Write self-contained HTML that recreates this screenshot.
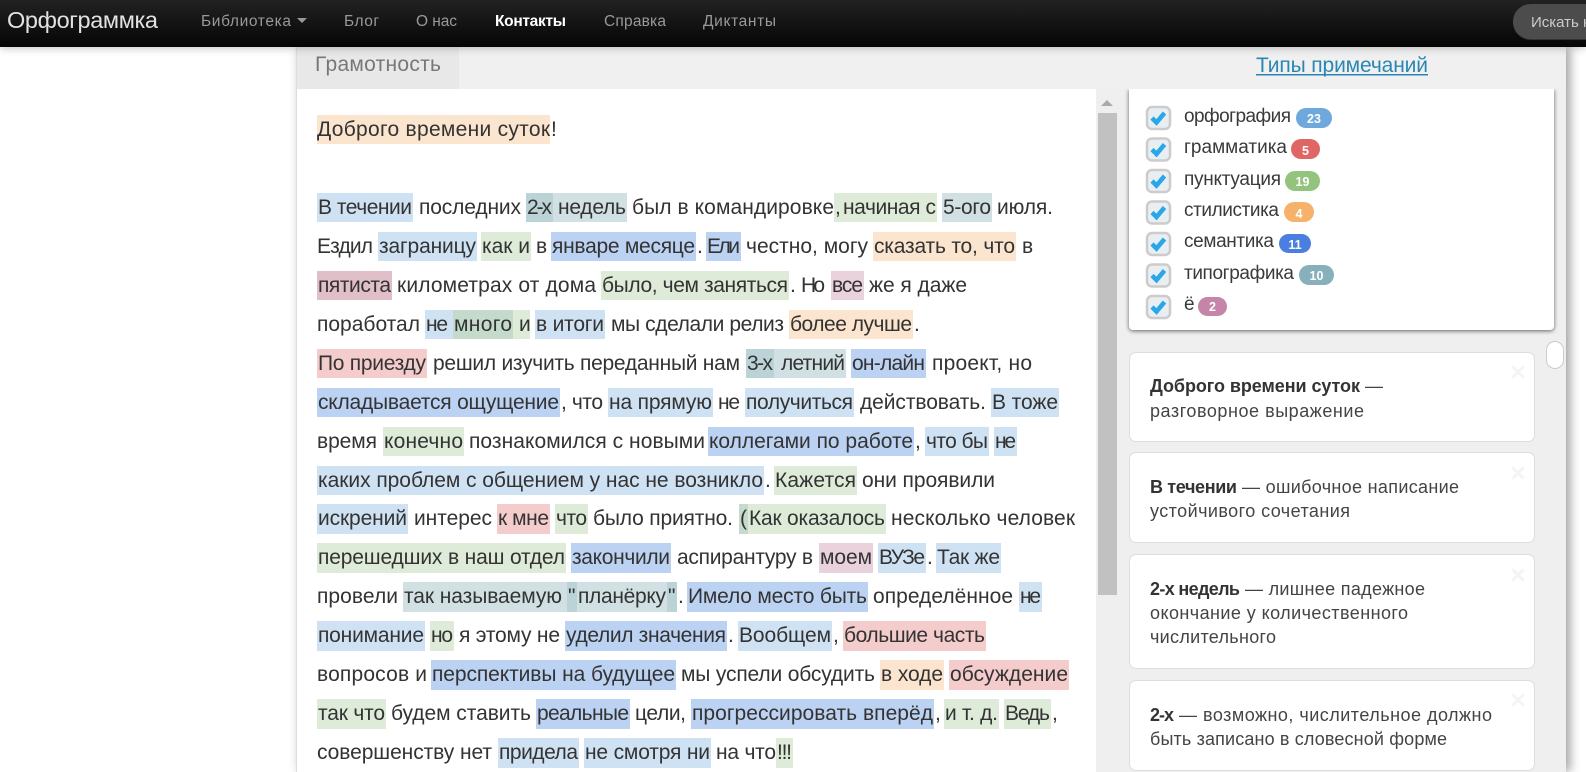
<!DOCTYPE html>
<html lang="ru">
<head>
<meta charset="utf-8">
<title>Орфограммка</title>
<style>
html,body{margin:0;padding:0;width:1586px;height:772px;overflow:hidden;background:#fff;font-family:"Liberation Sans",sans-serif}
div{position:absolute;box-sizing:border-box}
svg{position:absolute;left:0;top:0}
text{font-family:"Liberation Sans",sans-serif;font-size:21px;fill:#333}
.bl{fill:#cfe2f3}.b{fill:#bcd2f2}.g{fill:#deebd8}.o{fill:#fbe5cf}.r{fill:#f4cccc}.p{fill:#ead2dc}.pd{fill:#e0bfc9}.t{fill:#d0e0e3}.td{fill:#bbd3d6}.gd{fill:#c4dacb}
.nav text{font-size:15.5px;fill:#999}
.lab text{font-size:19px;fill:#3a3a3a}
.num text{font-size:12.5px;fill:#fff;font-weight:bold;text-anchor:middle}
.note text{font-size:18px;fill:#444}
.note text.s{font-weight:bold;fill:#333}
.x text{font-size:27px;font-weight:bold;fill:#f4f4f4;text-anchor:middle}
</style>
</head>
<body>
<div style="left:296px;top:47px;width:1270px;height:725px;background:#fff;border-left:1px solid #ddd;box-shadow:4px 0 10px rgba(0,0,0,.38)"></div>
<div style="left:1096px;top:89px;width:470px;height:683px;background:#efefef"></div>
<div style="left:1098px;top:113px;width:19px;height:482px;background:#c1c1c1"></div>
<div style="left:1129px;top:89px;width:425px;height:241px;background:#fff;border-radius:0 0 4px 4px;box-shadow:0 1px 4px rgba(0,0,0,.6)"></div>
<div style="left:297px;top:47px;width:1269px;height:42px;background:#f0f0f0"></div>
<div style="left:297px;top:47px;width:162px;height:42px;background:#e8e8e8"></div>
<div style="left:1129px;top:352px;width:406px;height:90px;background:#fff;border:1px solid #ddd;border-radius:7px"></div>
<div style="left:1129px;top:452px;width:406px;height:91px;background:#fff;border:1px solid #ddd;border-radius:7px"></div>
<div style="left:1129px;top:554px;width:406px;height:115px;background:#fff;border:1px solid #ddd;border-radius:7px"></div>
<div style="left:1129px;top:680px;width:406px;height:91px;background:#fff;border:1px solid #ddd;border-radius:7px"></div>
<div style="left:1546px;top:341px;width:18px;height:28px;background:#fff;border:1px solid #ccc;border-radius:9px"></div>
<div style="left:0;top:0;width:1586px;height:47px;background:linear-gradient(#222,#050505);box-shadow:0 1px 8px rgba(0,0,0,.25)"></div>
<div style="left:1513px;top:4px;width:90px;height:35px;background:#4c4c4c;border-radius:18px;box-shadow:0 1px 0 #333"></div>

<svg width="1586" height="772" viewBox="0 0 1586 772">
<g class="nav">
<text x="7" y="28" textLength="151" style="font-size:23.5px;fill:#e2e2e2">Орфограммка</text>
<text x="201" y="26" textLength="90">Библиотека</text>
<path d="M297 18h10l-5 5z" fill="#999"/>
<text x="344" y="26" textLength="35">Блог</text>
<text x="416" y="26" textLength="41">О нас</text>
<text x="495" y="26" textLength="71" style="fill:#fff;font-weight:bold">Контакты</text>
<text x="604" y="26" textLength="62">Справка</text>
<text x="703" y="26" textLength="73">Диктанты</text>
<text x="1531" y="27" style="fill:#ccc;font-size:15px">Искать на сайте</text>
</g>
<text x="315" y="71" textLength="126" style="fill:#777">Грамотность</text>
<text x="1256" y="72" textLength="172" style="fill:#2a87b5">Типы примечаний</text>
<rect x="1256" y="74" width="172" height="1.5" fill="#2a87b5"/>
<path d="M1101 106l6-6 6 6z" fill="#aaa"/>

<!-- highlights -->
<rect class="o" x="317" y="115" width="233" height="29"/>
<rect class="bl" x="317" y="193" width="96" height="29"/><rect class="td" x="526" y="193" width="27" height="29"/><rect class="t" x="553" y="193" width="74" height="29"/><rect class="g" x="834" y="193" width="103" height="29"/><rect class="t" x="942" y="193" width="50" height="29"/>
<rect class="bl" x="378" y="232" width="99" height="29"/><rect class="g" x="481" y="232" width="50" height="29"/><rect class="b" x="551" y="232" width="145" height="29"/><rect class="b" x="706" y="232" width="35" height="29"/><rect class="o" x="873" y="232" width="143" height="29"/>
<rect class="pd" x="317" y="271" width="75" height="29"/><rect class="g" x="601" y="271" width="188" height="29"/><rect class="p" x="831" y="271" width="33" height="29"/>
<rect class="bl" x="425" y="310" width="28" height="29"/><rect class="gd" x="453" y="310" width="60" height="29"/><rect class="g" x="513" y="310" width="17" height="29"/><rect class="bl" x="535" y="310" width="70" height="29"/><rect class="o" x="789" y="310" width="124" height="29"/>
<rect class="r" x="317" y="349" width="110" height="29"/><rect class="td" x="746" y="349" width="28" height="29"/><rect class="t" x="774" y="349" width="72" height="29"/><rect class="b" x="851" y="349" width="75" height="29"/>
<rect class="b" x="317" y="388" width="243" height="29"/><rect class="bl" x="608" y="388" width="105" height="29"/><rect class="bl" x="745" y="388" width="109" height="29"/><rect class="bl" x="991" y="388" width="68" height="29"/>
<rect class="g" x="383" y="427" width="81" height="29"/><rect class="b" x="708" y="427" width="206" height="29"/><rect class="bl" x="925" y="427" width="64" height="29"/><rect class="bl" x="994" y="427" width="23" height="29"/>
<rect class="bl" x="317" y="466" width="447" height="29"/><rect class="g" x="774" y="466" width="83" height="29"/>
<rect class="bl" x="317" y="504" width="91" height="30"/><rect class="r" x="497" y="504" width="53" height="30"/><rect class="g" x="555" y="504" width="33" height="30"/><rect class="gd" x="739" y="504" width="9" height="30"/><rect class="g" x="748" y="504" width="138" height="30"/>
<rect class="g" x="317" y="543" width="249" height="30"/><rect class="b" x="571" y="543" width="100" height="30"/><rect class="p" x="819" y="543" width="54" height="30"/><rect class="bl" x="878" y="543" width="48" height="30"/><rect class="bl" x="936" y="543" width="65" height="30"/>
<rect class="t" x="403" y="582" width="164" height="30"/><rect class="td" x="567" y="582" width="10" height="30"/><rect class="t" x="577" y="582" width="90" height="30"/><rect class="td" x="667" y="582" width="10" height="30"/><rect class="b" x="687" y="582" width="181" height="30"/><rect class="bl" x="1019" y="582" width="23" height="30"/>
<rect class="bl" x="317" y="621" width="108" height="30"/><rect class="g" x="430" y="621" width="24" height="30"/><rect class="b" x="565" y="621" width="162" height="30"/><rect class="bl" x="738" y="621" width="94" height="30"/><rect class="r" x="843" y="621" width="143" height="30"/>
<rect class="b" x="431" y="660" width="245" height="30"/><rect class="o" x="880" y="660" width="64" height="30"/><rect class="r" x="949" y="660" width="120" height="30"/>
<rect class="g" x="317" y="699" width="69" height="30"/><rect class="b" x="536" y="699" width="94" height="30"/><rect class="b" x="691" y="699" width="243" height="30"/><rect class="g" x="944" y="699" width="55" height="30"/><rect class="g" x="1004" y="699" width="47" height="30"/>
<rect class="bl" x="498" y="738" width="81" height="30"/><rect class="bl" x="584" y="738" width="127" height="30"/><rect class="g" x="776" y="738" width="17" height="30"/>

<!-- main text -->
<text x="317" y="136" textLength="233">Доброго времени суток</text><text x="551" y="136">!</text>

<text x="318" y="214" textLength="94">В течении</text><text x="419" y="214" textLength="102">последних</text><text x="527" y="214" textLength="25">2-х</text><text x="558" y="214" textLength="68">недель</text><text x="632" y="214" textLength="202">был в командировке</text><text x="835" y="214">,</text><text x="843" y="214" textLength="93">начиная с</text><text x="943" y="214" textLength="48">5-ого</text><text x="997" y="214" textLength="56">июля.</text>

<text x="317" y="253" textLength="56">Ездил</text><text x="379" y="253" textLength="97">заграницу</text><text x="482" y="253" textLength="48">как и</text><text x="536" y="253" textLength="10">в</text><text x="552" y="253" textLength="143">январе месяце</text><text x="697" y="253">.</text><text x="707" y="253" textLength="33">Ели</text><text x="746" y="253" textLength="122">честно, могу</text><text x="874" y="253" textLength="141">сказать то, что</text><text x="1022" y="253" textLength="10">в</text>

<text x="318" y="292" textLength="73">пятиста</text><text x="397" y="292" textLength="199">километрах от дома</text><text x="602" y="292" textLength="186">было, чем заняться</text><text x="790" y="292">.</text><text x="801" y="292" textLength="24">Но</text><text x="832" y="292" textLength="31">все</text><text x="869" y="292" textLength="98">же я даже</text>

<text x="317" y="331" textLength="103">поработал</text><text x="426" y="331" textLength="22">не</text><text x="454" y="331" textLength="58">много</text><text x="519" y="331" textLength="10">и</text><text x="536" y="331" textLength="68">в итоги</text><text x="611" y="331" textLength="173">мы сделали релиз</text><text x="790" y="331" textLength="122">более лучше</text><text x="914" y="331">.</text>

<text x="318" y="370" textLength="108">По приезду</text><text x="433" y="370" textLength="307">решил изучить переданный нам</text><text x="747" y="370" textLength="26">3-х</text><text x="781" y="370" textLength="64">летний</text><text x="852" y="370" textLength="73">он-лайн</text><text x="932" y="370" textLength="100">проект, но</text>

<text x="318" y="409" textLength="241">складывается ощущение</text><text x="561" y="409" textLength="42">, что</text><text x="609" y="409" textLength="103">на прямую</text><text x="718" y="409" textLength="22">не</text><text x="746" y="409" textLength="107">получиться</text><text x="860" y="409" textLength="126">действовать.</text><text x="992" y="409" textLength="66">В тоже</text>

<text x="317" y="448" textLength="60">время</text><text x="384" y="448" textLength="79">конечно</text><text x="469" y="448" textLength="236">познакомился с новыми</text><text x="709" y="448" textLength="204">коллегами по работе</text><text x="915" y="448">,</text><text x="926" y="448" textLength="62">что бы</text><text x="995" y="448" textLength="21">не</text>

<text x="318" y="487" textLength="445">каких проблем с общением у нас не возникло</text><text x="765" y="487">.</text><text x="775" y="487" textLength="81">Кажется</text><text x="862" y="487" textLength="133">они проявили</text>

<text x="318" y="525" textLength="89">искрений</text><text x="414" y="525" textLength="78">интерес</text><text x="498" y="525" textLength="51">к мне</text><text x="556" y="525" textLength="31">что</text><text x="593" y="525" textLength="140">было приятно.</text><text x="740" y="525">(</text><text x="749" y="525" textLength="136">Как оказалось</text><text x="891" y="525" textLength="184">несколько человек</text>

<text x="318" y="564" textLength="247">перешедших в наш отдел</text><text x="572" y="564" textLength="98">закончили</text><text x="677" y="564" textLength="136">аспирантуру в</text><text x="820" y="564" textLength="52">моем</text><text x="879" y="564" textLength="46">ВУЗе</text><text x="927" y="564">.</text><text x="937" y="564" textLength="63">Так же</text>

<text x="317" y="603" textLength="81">провели</text><text x="404" y="603" textLength="158">так называемую</text><text x="568" y="603">"</text><text x="578" y="603" textLength="88">планёрку</text><text x="668" y="603">"</text><text x="678" y="603">.</text><text x="688" y="603" textLength="179">Имело место быть</text><text x="873" y="603" textLength="140">определённое</text><text x="1020" y="603" textLength="21">не</text>

<text x="318" y="642" textLength="106">понимание</text><text x="431" y="642" textLength="22">но</text><text x="459" y="642" textLength="101">я этому не</text><text x="566" y="642" textLength="160">уделил значения</text><text x="728" y="642">.</text><text x="739" y="642" textLength="92">Вообщем</text><text x="833" y="642">,</text><text x="844" y="642" textLength="141">большие часть</text>

<text x="317" y="681" textLength="110">вопросов и</text><text x="432" y="681" textLength="243">перспективы на будущее</text><text x="681" y="681" textLength="194">мы успели обсудить</text><text x="881" y="681" textLength="62">в ходе</text><text x="950" y="681" textLength="118">обсуждение</text>

<text x="318" y="720" textLength="67">так что</text><text x="391" y="720" textLength="140">будем ставить</text><text x="537" y="720" textLength="92">реальные</text><text x="635" y="720" textLength="51">цели,</text><text x="692" y="720" textLength="241">прогрессировать вперёд</text><text x="935" y="720">,</text><text x="945" y="720" textLength="53">и т. д.</text><text x="1005" y="720" textLength="45">Ведь</text><text x="1052" y="720">,</text>

<text x="317" y="759" textLength="175">совершенству нет</text><text x="499" y="759" textLength="79">придела</text><text x="585" y="759" textLength="125">не смотря ни</text><text x="716" y="759" textLength="60">на что</text><text x="777" y="759" textLength="15">!!!</text>

<!-- checkboxes -->
<g id="cb">
<g transform="translate(1146,106)"><rect x="1" y="1" width="23" height="22" rx="5" fill="#e9eef2" stroke="#cccccc" stroke-width="2.500"/><path d="M6 12l4.500 4.500L18.500 7" fill="none" stroke="#2aa7e8" stroke-width="4.500"/></g>
<g transform="translate(1146,137.500)"><rect x="1" y="1" width="23" height="22" rx="5" fill="#e9eef2" stroke="#cccccc" stroke-width="2.500"/><path d="M6 12l4.500 4.500L18.500 7" fill="none" stroke="#2aa7e8" stroke-width="4.500"/></g>
<g transform="translate(1146,169)"><rect x="1" y="1" width="23" height="22" rx="5" fill="#e9eef2" stroke="#cccccc" stroke-width="2.500"/><path d="M6 12l4.500 4.500L18.500 7" fill="none" stroke="#2aa7e8" stroke-width="4.500"/></g>
<g transform="translate(1146,200.500)"><rect x="1" y="1" width="23" height="22" rx="5" fill="#e9eef2" stroke="#cccccc" stroke-width="2.500"/><path d="M6 12l4.500 4.500L18.500 7" fill="none" stroke="#2aa7e8" stroke-width="4.500"/></g>
<g transform="translate(1146,232)"><rect x="1" y="1" width="23" height="22" rx="5" fill="#e9eef2" stroke="#cccccc" stroke-width="2.500"/><path d="M6 12l4.500 4.500L18.500 7" fill="none" stroke="#2aa7e8" stroke-width="4.500"/></g>
<g transform="translate(1146,263.500)"><rect x="1" y="1" width="23" height="22" rx="5" fill="#e9eef2" stroke="#cccccc" stroke-width="2.500"/><path d="M6 12l4.500 4.500L18.500 7" fill="none" stroke="#2aa7e8" stroke-width="4.500"/></g>
<g transform="translate(1146,295)"><rect x="1" y="1" width="23" height="22" rx="5" fill="#e9eef2" stroke="#cccccc" stroke-width="2.500"/><path d="M6 12l4.500 4.500L18.500 7" fill="none" stroke="#2aa7e8" stroke-width="4.500"/></g>
</g>
<g class="lab">
<text x="1184" y="122" textLength="107">орфография</text>
<text x="1184" y="153" textLength="103">грамматика</text>
<text x="1184" y="185" textLength="97">пунктуация</text>
<text x="1184" y="216" textLength="95">стилистика</text>
<text x="1184" y="247" textLength="90">семантика</text>
<text x="1184" y="279" textLength="110">типографика</text>
<text x="1184" y="310" textLength="9">ё</text>
</g>
<rect x="1296" y="108" width="36" height="20" rx="10" fill="#6fa8dc"/>
<rect x="1291" y="139" width="29" height="20" rx="10" fill="#e06666"/>
<rect x="1285" y="171" width="35" height="20" rx="10" fill="#93c47d"/>
<rect x="1284" y="202" width="30" height="20" rx="10" fill="#f6b26b"/>
<rect x="1279" y="234" width="32" height="19" rx="9.500" fill="#4a7fdf"/>
<rect x="1299" y="265" width="35" height="20" rx="10" fill="#88b0ba"/>
<rect x="1198" y="297" width="29" height="19" rx="9.500" fill="#c585a8"/>
<g class="num">
<text x="1314" y="123">23</text>
<text x="1305.500" y="155">5</text>
<text x="1302.500" y="186">19</text>
<text x="1299" y="218">4</text>
<text x="1295" y="249">11</text>
<text x="1316.500" y="280">10</text>
<text x="1212.500" y="311">2</text>
</g>

<!-- notes -->
<g class="note">
<text class="s" x="1150" y="392" textLength="210">Доброго времени суток</text><text x="1365" y="392" textLength="19">—</text>
<text x="1150" y="417" textLength="214">разговорное выражение</text>
<text class="s" x="1150" y="493" textLength="87">В течении</text><text x="1242" y="493" textLength="217">— ошибочное написание</text>
<text x="1150" y="517" textLength="200">устойчивого сочетания</text>
<text class="s" x="1150" y="595" textLength="90">2-х недель</text><text x="1245" y="595" textLength="180">— лишнее падежное</text>
<text x="1150" y="619" textLength="258">окончание у количественного</text>
<text x="1150" y="643" textLength="126">числительного</text>
<text class="s" x="1150" y="721" textLength="24">2-х</text><text x="1179" y="721" textLength="313">— возможно, числительное должно</text>
<text x="1150" y="745" textLength="297">быть записано в словесной форме</text>
</g>
<g class="x">
<text x="1518" y="381">×</text>
<text x="1518" y="482">×</text>
<text x="1518" y="584">×</text>
<text x="1518" y="709">×</text>
</g>
</svg>
</body>
</html>
